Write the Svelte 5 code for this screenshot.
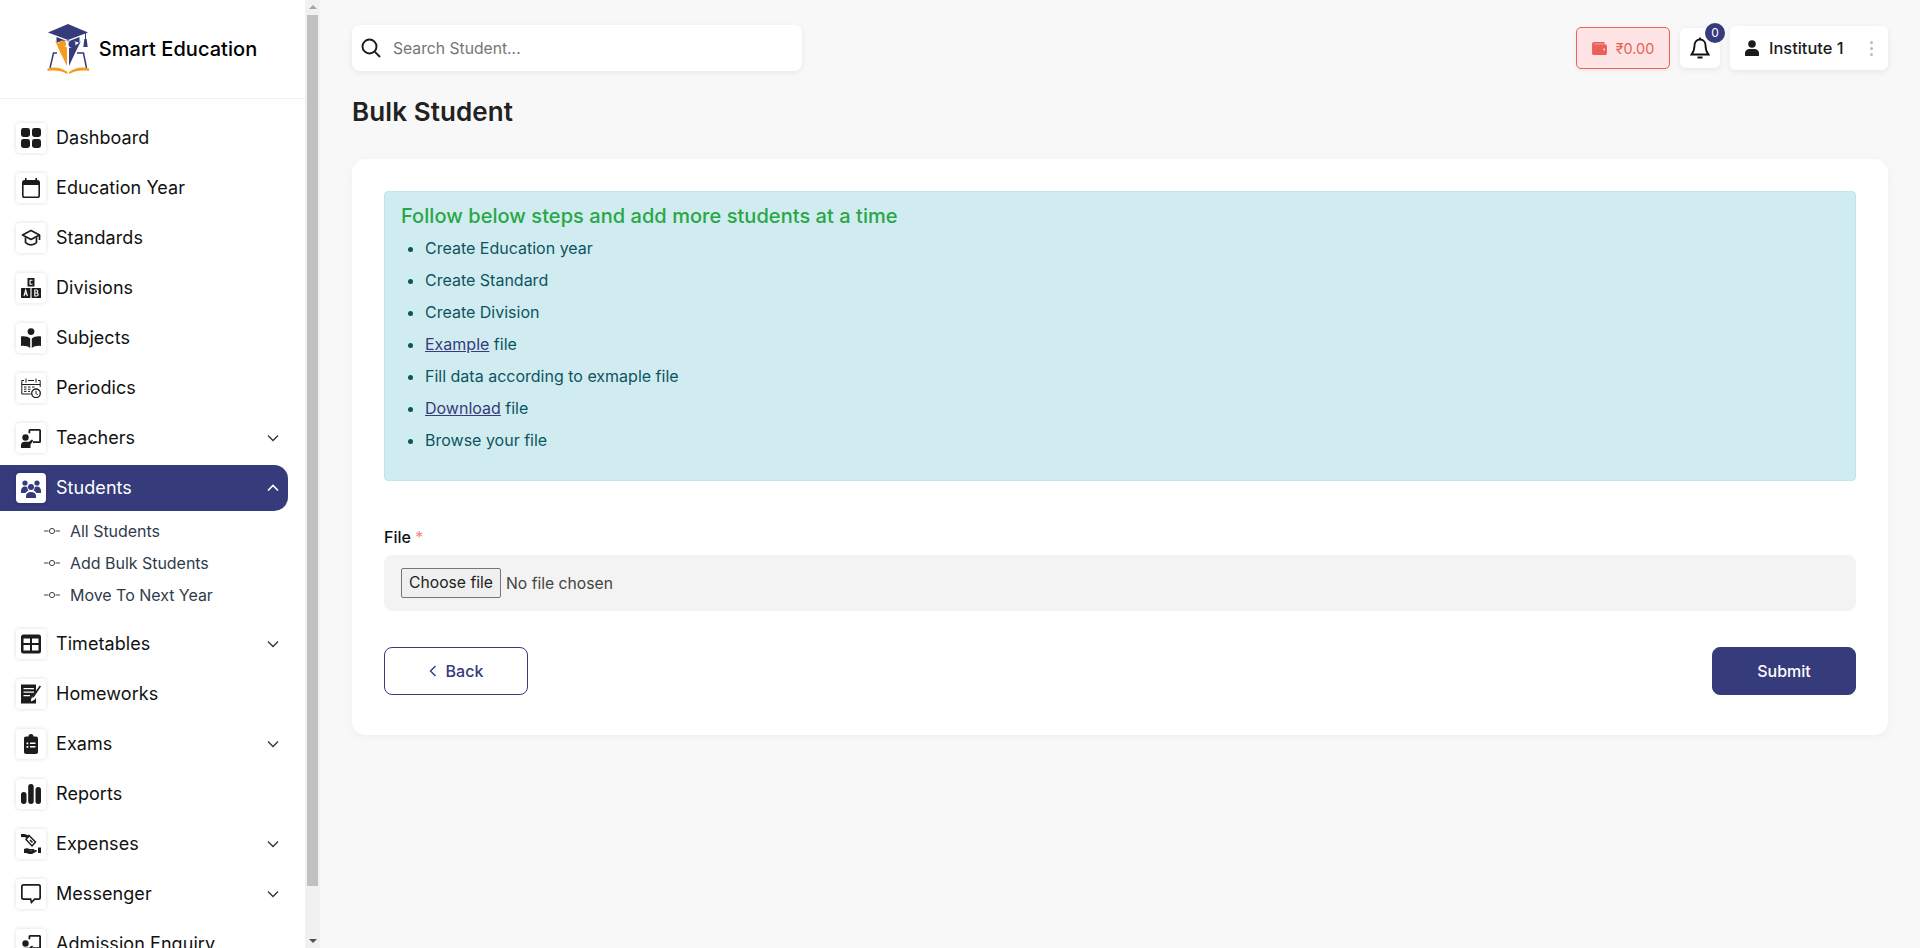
<script>
  const steps = [
    { text: 'Create Education year' },
    { text: 'Create Standard' },
    { text: 'Create Division' },
    { link: 'Example', text: ' file' },
    { text: 'Fill data according to exmaple file' },
    { link: 'Download', text: ' file' },
    { text: 'Browse your file' }
  ];
  const before = [
    { label: 'Dashboard', icon: dashboardIcon },
    { label: 'Education Year', icon: calendarIcon },
    { label: 'Standards', icon: capIcon },
    { label: 'Divisions', icon: blocksIcon },
    { label: 'Subjects', icon: readerIcon },
    { label: 'Periodics', icon: periodIcon },
    { label: 'Teachers', icon: teacherIcon, more: true }
  ];
  const after = [
    { label: 'Timetables', icon: tableIcon, more: true },
    { label: 'Homeworks', icon: homeworkIcon },
    { label: 'Exams', icon: clipboardIcon, more: true },
    { label: 'Reports', icon: barsIcon },
    { label: 'Expenses', icon: moneyIcon, more: true },
    { label: 'Messenger', icon: chatIcon, more: true },
    { label: 'Admission Enquiry', icon: teacherIcon }
  ];
  const subs = ['All Students', 'Add Bulk Students', 'Move To Next Year'];
</script>

{#snippet dashboardIcon()}
  <rect x="0" y="0" width="9" height="9" rx="2.4" /><rect x="11" y="0" width="9" height="9" rx="2.4" />
  <rect x="0" y="11" width="9" height="9" rx="2.4" /><rect x="11" y="11" width="9" height="9" rx="2.4" />
{/snippet}
{#snippet calendarIcon()}
  <path fill-rule="evenodd" d="M4 0h1.600v2h8.800V0H16v2h.4A2.600 2.600 0 0 1 19 4.600v12.800a2.600 2.600 0 0 1-2.600 2.600H3.600A2.600 2.600 0 0 1 1 17.400V4.600A2.600 2.600 0 0 1 3.600 2H4V0ZM2.600 7v10.400c0 .6.4 1 1 1h12.800c.6 0 1-.4 1-1V7H2.600Z" />
{/snippet}
{#snippet capIcon()}
  <path class="line" d="M10 2.500 1.500 7 10 11.500 18.500 7 10 2.500Z" />
  <path class="line" d="M4.500 9.200v5.300c1.400 1.600 3.400 2.400 5.500 2.400s4.100-.8 5.500-2.400V9.200M18.500 7v5" />
{/snippet}
{#snippet blocksIcon()}
  <rect x="6.500" y="0" width="7" height="8.500" rx=".4" /><rect x="0" y="10" width="9.400" height="10" rx=".4" /><rect x="10.600" y="10" width="9.400" height="10" rx=".4" />
  <path class="cut" d="M11.500 2.300H9v4h2.500M3 18l1.700-6 1.700 6M3.700 16h2M13.800 12v6h1.800c2.200 0 2.200-3 0-3h-1.800 1.600c1.800 0 1.800-3 0-3h-1.600Z" />
{/snippet}
{#snippet readerIcon()}
  <circle cx="10" cy="3.600" r="3.400" />
  <path d="M0 8.500c3.500-.7 7 .1 9.200 2V20C7 18.200 3.500 17.500 0 18V8.500ZM20 8.500c-3.500-.7-7 .1-9.200 2V20c2.200-1.800 5.700-2.500 9.200-2V8.500Z" />
{/snippet}
{#snippet periodIcon()}
  <g class="thin">
    <path d="M3 2.500H.8v13.500h9M7 2.500h6M17 2.500h2.200v6.500M.8 6.500h18.400M5 .5v4M15 .5v4" />
    <path d="M3 9h2.500M7 9h2.500M11 9h2.500M3 11.200h2.500M7 11.200h2.500M3 13.400h2.500M7 13.400h2" />
    <circle cx="15" cy="15.300" r="4.300" stroke-width="1.300" /><path d="M15 12.800v2.800l1.800 1" />
  </g>
{/snippet}
{#snippet teacherIcon()}
  <path d="M7.500 2.500A1.500 1.500 0 0 1 9 1h9.500a1.500 1.500 0 0 1 1.500 1.500v11a1.500 1.500 0 0 1-1.500 1.500h-6.500v-1.800h6.200V2.800H9.300v2.500H7.500V2.500Z" />
  <circle cx="4.500" cy="9.500" r="3.200" />
  <path d="M0 20v-2.800c0-2 1.500-3.500 3.500-3.500H8l3-2.300 1.200 1.300L9.500 16.500V20H0Z" />
{/snippet}
{#snippet studentsIcon()}
  <circle cx="4" cy="5" r="2.600" /><circle cx="16" cy="5" r="2.600" /><circle cx="10" cy="9" r="3" />
  <path d="M0 13c0-2.500 1.500-4.500 4-4.500 1.100 0 1.900.3 2.600.9-.3 1.200.2 2.300 1 3.100C6 13.200 5 14 4.700 15H0v-2ZM20 13c0-2.500-1.500-4.500-4-4.500-1.100 0-1.900.3-2.600.9.3 1.200-.2 2.300-1 3.100 1.600.7 2.600 1.500 2.900 2.500H20v-2ZM5 20v-2c0-2.500 2-4 5-4s5 1.500 5 4v2H5Z" />
{/snippet}
{#snippet tableIcon()}
  <path fill-rule="evenodd" d="M2.500 .5h15A2.500 2.500 0 0 1 20 3v14a2.500 2.500 0 0 1-2.500 2.500h-15A2.500 2.500 0 0 1 0 17V3A2.500 2.500 0 0 1 2.500 .5ZM2.500 4.500V9H9V4.500H2.500ZM11 4.500V9h6.500V4.500H11ZM2.500 11v5.500H9V11H2.500ZM11 11v5.500h6.500V11H11Z" />
{/snippet}
{#snippet homeworkIcon()}
  <path fill-rule="evenodd" d="M0 .5h15v7L10.500 14l-.7 3.500 3.500-1.500 1.700-2.300V19.500H0V.5ZM2.500 4v1.300H13V4H2.500ZM2.500 7.500v1.300H13V7.500H2.500ZM2.500 11v1.300h6.500V11H2.500Z" />
  <path d="M18.700 1.500 20 2.500 13 13l-1.800 1 .3-2.100 7.200-10.400Z" />
{/snippet}
{#snippet clipboardIcon()}
  <path fill-rule="evenodd" d="M7.500 2.500a2.500 2.500 0 0 1 5 0H15c1.200 0 2 .8 2 2V18c0 1.200-.8 2-2 2H5c-1.200 0-2-.8-2-2V4.500c0-1.200.8-2 2-2h2.500ZM5.500 8.500v1.700h1.800V8.500H5.500ZM9 8.600v1.500h5.500V8.600H9ZM5.500 12v1.700h1.800V12H5.500ZM9 12.100v1.500h5.500v-1.500H9Z" />
{/snippet}
{#snippet barsIcon()}
  <rect x="0" y="8" width="5.500" height="12" rx="2.700" /><rect x="7.200" y="0" width="5.500" height="20" rx="2.700" /><rect x="14.500" y="3" width="5.500" height="17" rx="2.700" />
{/snippet}
{#snippet moneyIcon()}
  <path d="M0 0h3.500L7 1.200 8.500 3 6 4 4 3.300 0 3V0Z" />
  <path class="thick" d="M8 1.500l6.500 6.500-3.500 4-6-6.500ZM9 6l2.500 2.500" />
  <path d="M3 15c2-1 4-1 5.500 0h4c1 0 1 1.300 0 1.500h-3v.5l5-1c1.200-.4 2 .7 1 1.400L11 20c-2.500.5-4-.5-6-1H3v-4ZM17 13.500h3v5.500h-3v-5.500Z" />
{/snippet}
{#snippet chatIcon()}
  <path fill-rule="evenodd" d="M2.500 0h15A2.500 2.500 0 0 1 20 2.500v11a2.500 2.500 0 0 1-2.500 2.500H14l-4 4-1-4H2.500A2.500 2.500 0 0 1 0 13.500v-11A2.500 2.500 0 0 1 2.500 0ZM2.800 1.700c-.6 0-1.100.5-1.100 1.100v10.400c0 .6.500 1.100 1.100 1.100h7.500l.6 2.400 2.400-2.400h3.900c.6 0 1.100-.5 1.100-1.100V2.800c0-.6-.5-1.100-1.100-1.100H2.800Z" />
{/snippet}
{#snippet chevron(up)}
  <svg class="chev" viewBox="0 0 12 8" class:up><path d="M1 1.500 6 6.500l5-5" /></svg>
{/snippet}
{#snippet navRow(item)}
  <div class="row">
    <span class="box"><svg viewBox="0 0 20 20">{@render item.icon()}</svg></span>
    <span class="label">{item.label}</span>
    {#if item.more}{@render chevron(false)}{/if}
  </div>
{/snippet}

<div class="page">
  <aside class="sidebar">
    <div class="side-scroll">
      <div class="brand">
        <svg class="logo" viewBox="0 0 43 50">
          <path fill="#353b7b" d="M21 0 41 8.500 21 16 1 8.500 21 0Z" />
          <path fill="#353b7b" d="M9.500 13v6c6-3.500 17-3.500 23 0v-6L21 17.500 9.500 13Z" />
          <path fill="none" stroke="#353b7b" d="M25 8l13.500 1v8" />
          <path fill="#353b7b" d="M37.300 15h2.400l1 8h-4.400Z" />
          <circle cx="15.500" cy="20" r="3.500" fill="#f39c1f" /><circle cx="25" cy="20" r="3.500" fill="#353b7b" />
          <path fill="#f39c1f" d="M8 16.500c3.500 3 7.500 6 12 7V42L13 28 8 16.500Z" />
          <path fill="#353b7b" d="M34 17c-3 3-7.500 6-12 7v18l6.500-14L34 17Z" />
          <path fill="none" stroke="#353b7b" stroke-width="1.500" d="M10 29H6.500L3 44M30 29h6.500l3 15" />
          <path fill="#f39c1f" d="M.5 44.500c7-2.500 15-.5 20 3.500v2c-6-3.300-13-4-20-3v-2.500ZM42 44.500c-7-2.500-15-.5-20 3.500v2c6-3.300 13-4 20-3v-2.500Z" />
        </svg>
        <span class="brand-name">Smart Education</span>
      </div>
      <nav class="nav">
        {#each before as item}{@render navRow(item)}{/each}
        <div class="row active">
          <span class="box"><svg viewBox="0 0 20 20">{@render studentsIcon()}</svg></span>
          <span class="label">Students</span>
          {@render chevron(true)}
        </div>
        <div class="subs">
          {#each subs as sub}
            <div class="sub">
              <svg viewBox="0 0 16 8"><path d="M0 4h4.500M11.500 4H16" /><circle cx="8" cy="4" r="2.600" /></svg>
              {sub}
            </div>
          {/each}
        </div>
        {#each after as item}{@render navRow(item)}{/each}
      </nav>
    </div>
    <div class="scrollbar" aria-hidden="true">
      <span class="arrow up"></span>
      <span class="thumb-track"><span class="thumb"></span></span>
      <span class="arrow down"></span>
    </div>
  </aside>

  <main class="main">
    <header class="topbar">
      <div class="search">
        <svg viewBox="0 0 20 20"><circle cx="8.500" cy="8.500" r="7" /><path d="m13.700 13.700 5.300 5.300" /></svg>
        <span class="placeholder">Search Student...</span>
      </div>
      <div class="tools">
        <div class="wallet">
          <svg viewBox="0 0 16 14"><path d="M2 0h11.500v2H2.500v.5H14a2 2 0 0 1 2 2V12a2 2 0 0 1-2 2H2a2 2 0 0 1-2-2V2a2 2 0 0 1 2-2Z" /><circle cx="13" cy="8" r="1" fill="#fee4e4" /></svg>
          <span>₹0.00</span>
        </div>
        <div class="bell">
          <svg viewBox="0 0 20 22"><path d="M10 2.500c-3.600 0-5.500 2.800-5.500 6 0 4.500-1 6.500-3 9h17c-2-2.500-3-4.500-3-9 0-3.200-1.900-6-5.500-6Z" /><path d="M10 .5v2M7.500 20.500h5" /></svg>
          <span class="badge">0</span>
        </div>
        <div class="user">
          <svg viewBox="0 0 16 16"><circle cx="8" cy="4" r="3.800" /><path d="M1 16v-2.500C1 10.500 3 9 5.500 9h5c2.500 0 4.500 1.500 4.500 4.500V16H1Z" /></svg>
          <span class="user-name">Institute 1</span>
          <span class="dots"><i></i><i></i><i></i></span>
        </div>
      </div>
    </header>

    <h1>Bulk Student</h1>

    <section class="card">
      <div class="alert">
        <h2>Follow below steps and add more students at a time</h2>
        <ul>
          {#each steps as step}
            <li>{#if step.link}<a href="#top">{step.link}</a>{/if}{step.text}</li>
          {/each}
        </ul>
      </div>
      <div class="file-label">File <span>*</span></div>
      <div class="file-field">
        <span class="choose">Choose file</span>
        <span class="no-file">No file chosen</span>
      </div>
      <div class="actions">
        <button class="back">
          <svg viewBox="0 0 8 12"><path d="M6.500 1 1.500 6l5 5" /></svg>
          Back
        </button>
        <button class="submit">Submit</button>
      </div>
    </section>
  </main>
</div>

<style>
  :global(body) {
    margin: 0;
    background: #f8f8f8;
    font-family: Inter, "Liberation Sans", sans-serif;
    color: #1c1c1c;
  }
  :global(html), :global(body) { overflow: hidden; }
  .page { display: flex; height: 948px; overflow: hidden; }

  .sidebar {
    flex: 0 0 320px;
    display: flex;
    height: 948px;
    background: #fff;
  }
  .side-scroll { flex: 1; min-width: 0; overflow: hidden; }
  .scrollbar {
    flex: 0 0 15px;
    display: flex;
    flex-direction: column;
    background: #f1f1f1;
  }
  .arrow { flex: 0 0 15px; position: relative; }
  .arrow::after {
    content: "";
    position: absolute;
    left: 3.500px;
    border-left: 4px solid transparent;
    border-right: 4px solid transparent;
  }
  .arrow.up::after { top: 5px; border-bottom: 4px solid #a3a3a3; }
  .arrow.down::after { top: 6px; border-top: 4px solid #505050; }
  .thumb-track { flex: 1; }
  .thumb { display: block; height: 871px; margin: 0 2px; background: #c1c1c1; }

  .brand {
    display: flex;
    align-items: center;
    justify-content: center;
    gap: 9px;
    height: 98px;
    border-bottom: 1px solid #f0f0f0;
    padding-right: 1px;
  }
  .logo { width: 43px; height: 50px; margin-top: -1px; }
  .brand-name { font-size: 20px; font-weight: 500; color: #000; letter-spacing: .05px; }

  .nav { padding: 16px 17px 0 0; }
  .row {
    display: flex;
    align-items: center;
    height: 46px;
    padding: 0 8px 0 16px;
    margin-bottom: 4px;
    color: #111;
    border-radius: 0 14px 14px 0;
  }
  .box {
    flex: none;
    display: flex;
    align-items: center;
    justify-content: center;
    width: 30px;
    height: 30px;
    border-radius: 4px;
    background: #fff;
    box-shadow: 0 0 4px rgba(0, 0, 0, .14);
  }
  .box svg { width: 20px; height: 20px; fill: #1c1c1c; }
  .box :global(.line) { fill: none; stroke: #1c1c1c; stroke-width: 1.700; stroke-linejoin: round; }
  .box :global(.thin) { fill: none; stroke: #1c1c1c; stroke-width: 1; }
  .box :global(.thick) { fill: none; stroke: #1c1c1c; stroke-width: 1.500; }
  .box :global(.cut) { fill: none; stroke: #fff; stroke-width: 1.100; }
  .label { flex: 1; margin-left: 10px; font-size: 18px; line-height: 24px; letter-spacing: .06px; }
  .chev { width: 12px; height: 8px; fill: none; stroke: #333; stroke-width: 1.300; margin-right: 1px; }
  .chev.up { transform: rotate(180deg); stroke: #fff; stroke-width: 1.600; }
  .active { background: #353b7b; color: #fff; }
  .active .box svg { fill: #353b7b; }

  .subs { padding-left: 44px; margin-bottom: 10px; }
  .sub {
    display: flex;
    align-items: center;
    gap: 10px;
    height: 32px;
    font-size: 16px;
    color: #2f3b4c;
    letter-spacing: -.03px;
  }
  .sub svg { width: 16px; height: 8px; fill: none; stroke: #444; stroke-width: 1; }

  .main { flex: 1; min-width: 0; padding: 25px 32px 0; }
  .topbar { display: flex; justify-content: space-between; align-items: center; height: 46px; }
  .search {
    display: flex;
    align-items: center;
    box-sizing: border-box;
    width: 450px;
    height: 46px;
    padding-left: 9px;
    background: #fff;
    border-radius: 8px;
    box-shadow: 0 2px 6px rgba(0, 0, 0, .07);
  }
  .search svg { width: 20px; height: 20px; fill: none; stroke: #1c1c1c; stroke-width: 1.900; }
  .placeholder { margin-left: 12px; font-size: 15.700px; color: #757575; }
  .tools { display: flex; align-items: center; }
  .wallet {
    display: flex;
    align-items: center;
    justify-content: center;
    gap: 9px;
    box-sizing: border-box;
    width: 94px;
    height: 42px;
    background: #fee4e4;
    border: 1px solid #e8645a;
    border-radius: 5px;
    color: #ea5f58;
    font-size: 14.400px;
    box-shadow: 0 2px 4px rgba(0, 0, 0, .06);
  }
  .wallet svg { width: 15px; height: 13px; fill: #ea5f58; }
  .bell {
    position: relative;
    display: flex;
    align-items: center;
    justify-content: center;
    width: 40px;
    height: 40px;
    margin-left: 10px;
    background: #fff;
    border-radius: 6px;
    box-shadow: 0 2px 6px rgba(0, 0, 0, .07);
  }
  .bell svg { width: 20px; height: 22px; fill: none; stroke: #111; stroke-width: 1.800; }
  .badge {
    position: absolute;
    top: -5px;
    right: -5px;
    width: 20px;
    height: 20px;
    border-radius: 50%;
    background: #353b7b;
    color: #fff;
    font-size: 12px;
    line-height: 19px;
    text-align: center;
  }
  .user {
    display: flex;
    align-items: center;
    box-sizing: border-box;
    width: 158px;
    height: 44px;
    margin-left: 10px;
    padding-left: 14px;
    background: #fff;
    border-radius: 6px;
    box-shadow: 0 2px 6px rgba(0, 0, 0, .07);
  }
  .user svg { width: 16px; height: 16px; fill: #1c1c1c; }
  .user-name { margin-left: 9px; font-size: 16.400px; font-weight: 500; color: #1c1c1c; }
  .dots { display: flex; flex-direction: column; gap: 3px; margin-left: 26px; }
  .dots i { width: 3px; height: 3px; border-radius: 50%; background: #bbb; }

  h1 { margin: 23px 0 0; font-size: 26px; line-height: 36px; font-weight: 600; color: #222; letter-spacing: .1px; }
  .card {
    margin-top: 29px;
    box-sizing: border-box;
    height: 576px;
    padding: 32px;
    background: #fff;
    border-radius: 14px;
    box-shadow: 0 2px 8px rgba(0, 0, 0, .04);
  }
  .alert {
    box-sizing: border-box;
    height: 290px;
    padding: 12px 16px;
    background: #d1ecf1;
    border: 1px solid #bee5eb;
    border-radius: 4px;
    color: #0c5460;
    font-size: 16px;
  }
  h2 { margin: 0; font-size: 20px; line-height: 24px; font-weight: 500; color: #28a745; letter-spacing: .05px; }
  ul { margin: 4px 0 0; padding-left: 24px; }
  li { height: 32px; line-height: 32px; }
  a { color: #353b7b; }
  .file-label { margin-top: 44px; font-size: 16px; font-weight: 500; line-height: 24px; color: #111; }
  .file-label span { color: #f08a84; font-weight: 400; }
  .file-field {
    display: flex;
    align-items: center;
    box-sizing: border-box;
    height: 56px;
    margin-top: 6px;
    padding-left: 17px;
    background: #f3f3f3;
    border-radius: 8px;
    font-size: 15.700px;
    color: #444;
  }
  .choose {
    box-sizing: border-box;
    width: 100px;
    height: 30px;
    line-height: 28px;
    text-align: center;
    background: #efefef;
    border: 1px solid #767676;
    border-radius: 2px;
    color: #222;
    margin-right: 5px;
  }
  .actions { display: flex; justify-content: space-between; margin-top: 36px; }
  button {
    display: flex;
    align-items: center;
    justify-content: center;
    gap: 9px;
    width: 144px;
    height: 48px;
    border-radius: 8px;
    font: 450 16px Inter, sans-serif;
    border: 1px solid #353b7b;
  }
  .back { background: #fff; color: #353b7b; }
  .back svg { width: 8px; height: 12px; fill: none; stroke: #353b7b; stroke-width: 1.400; }
  .submit { background: #353b7b; color: #fff; }
</style>
